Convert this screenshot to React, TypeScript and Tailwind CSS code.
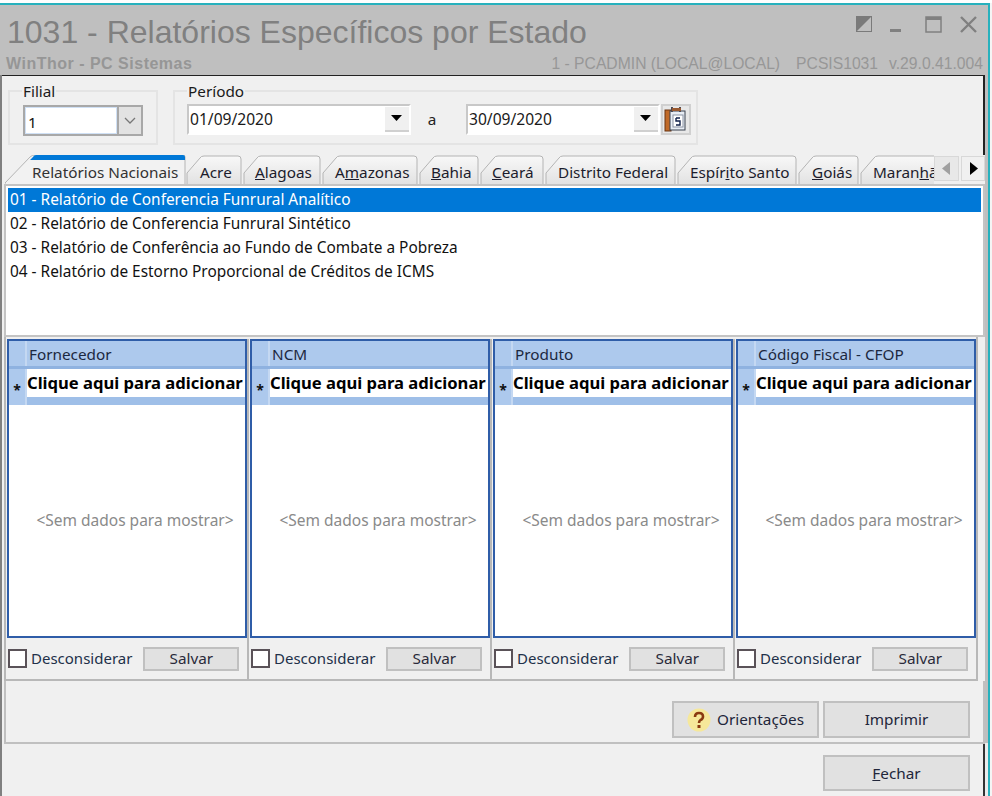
import React from "react";

const FONT = { fontFamily: '"Noto Sans", sans-serif' };
const SANS = { fontFamily: '"Liberation Sans", sans-serif' };

const tabs = [
  { w: 57, label: "Acre", x: 14 },
  { w: 79, label: "Alagoas", u: 0, x: 12 },
  { w: 97, label: "Amazonas", u: 1, x: 13 },
  { w: 61, label: "Bahia", u: 0, x: 12 },
  { w: 65, label: "Ceará", u: 0, x: 12 },
  { w: 132, label: "Distrito Federal", x: 13 },
  { w: 121, label: "Espírito Santo", u: 5, x: 13 },
  { w: 62, label: "Goiás", u: 0, x: 14 },
  { w: 85, label: "Maranhão", u: 5, x: 13 },
];

function Label({ text, u }: { text: string; u?: number }) {
  if (u === undefined) return <>{text}</>;
  return (
    <>
      {text.slice(0, u)}
      <span className="underline">{text[u]}</span>
      {text.slice(u + 1)}
    </>
  );
}

function Tab({ w, label, u, x }: { w: number; label: string; u?: number; x: number }) {
  return (
    <div className="relative h-[29px] shrink-0" style={{ width: w }}>
      <svg className="absolute inset-0" width={w} height={29}>
        <defs>
          <linearGradient id="tabfill" x1="0" y1="0" x2="0" y2="1">
            <stop offset="0" stopColor="#f8f8f8" />
            <stop offset="1" stopColor="#e2e2e2" />
          </linearGradient>
        </defs>
        <path
          d={`M1 29 V18 L14 3 Q15 1 18 1 H${w - 5} Q${w - 2} 1 ${w - 2} 4 V29`}
          fill="url(#tabfill)"
          stroke="#b4b4b4"
        />
      </svg>
      <div
        className="absolute top-[5px] whitespace-nowrap text-[15.3px] leading-[24px] text-[#1c1c2c]"
        style={{ left: x }}
      >
        <Label text={label} u={u} />
      </div>
    </div>
  );
}

function Panel({ title }: { title: string }) {
  return (
    <div className="flex w-[243px] shrink-0 flex-col border-r-2 border-[#b8b8b8] pl-[1px] last:w-[241px] last:border-r-0">
      <div className="flex h-[299px] w-[240px] flex-col border-2 border-[#2f5da8] bg-white">
        <div className="flex h-[28px] border-b-[3px] border-[#8fb2e0] bg-[#adc9ed]">
          <div className="w-[18px] border-r-2 border-[#c4d8f2]" />
          <div className="pl-[2px] text-[15.3px] leading-[26px] text-[#1c2840]">{title}</div>
        </div>
        <div className="flex h-[36px]">
          <div className="flex w-[18px] items-center justify-center border-r-2 border-[#c4d8f2] bg-[#adc9ed] pt-1 text-[14px] font-bold text-[#111]">*</div>
          <div className="flex min-w-0 flex-1 flex-col">
            <div className="flex-1 whitespace-nowrap text-[16.6px] font-bold leading-[27px] text-black">Clique aqui para adicionar</div>
            <div className="h-[8px] bg-[#9fbfe8]" />
          </div>
        </div>
        <div className="flex flex-1 items-center justify-center pl-[16px] text-[15.5px] text-[#8a8a8a]">&lt;Sem dados para mostrar&gt;</div>
      </div>
      <div className="flex h-[41px] items-center pl-[1px]">
        <div className="h-[19px] w-[19px] shrink-0 border-2 border-[#5a5258] bg-white" />
        <div className="ml-[4px] whitespace-nowrap text-[15px] text-[#22304a]">Desconsiderar</div>
        <div className="ml-[11px] flex h-[24px] w-[96px] shrink-0 items-center justify-center border-2 border-[#c0c0c0] bg-[#e1e1e1] text-[15.3px] text-[#2a2a3a]">Salvar</div>
      </div>
    </div>
  );
}

function Btn({ className, children }: { className: string; children: React.ReactNode }) {
  return (
    <div className={`flex items-center justify-center border-2 border-[#c0c0c0] bg-[#e1e1e1] text-[15.3px] text-[#22263a] ${className}`}>
      {children}
    </div>
  );
}

function DropBtn() {
  return (
    <div className="flex h-[25px] w-[24px] items-center justify-center border-b-2 border-[#d0d0d0] bg-[#f0f0f0]">
      <svg width="12" height="7"><path d="M0 0H11L5.5 6Z" fill="#000" /></svg>
    </div>
  );
}

function DateBox({ value, w }: { value: string; w: number }) {
  return (
    <div className="flex h-[31px] items-center border-2 border-[#c8c8c8] border-r-white border-b-white bg-white pl-[1px]" style={{ width: w }}>
      <div className="flex-1 text-[15.6px] text-[#1a1a1a]">{value}</div>
      <DropBtn />
    </div>
  );
}

export default function App() {
  return (
    <div className="h-[796px] w-[992px] overflow-hidden bg-[#f5f5f5]" style={FONT}>
      <div className="h-[3px] bg-white" />
      <div className="w-[990px] border-t-2 border-r-2 border-[#27b1bd]">
        <div className="flex h-[70px] flex-col justify-between bg-[#bfbfbf] pr-[4px] pl-[7px]">
          <div className="flex items-start justify-between">
            <div className="whitespace-nowrap pt-[4px] text-[32px] leading-[46px] text-[#808080]" style={SANS}>
              1031 - Relatórios Específicos por Estado
            </div>
            <div className="flex items-center pt-[11px] pr-[7px]">
              <svg width="17" height="17" viewBox="0 0 17 17"><rect x="0.5" y="0.5" width="15" height="15" fill="none" stroke="#7a7a7a" /><path d="M1 1H15L1 15Z" fill="#7a7a7a" /></svg>
              <svg className="ml-[17px]" width="11" height="17" viewBox="0 0 11 17"><rect y="13" width="11" height="3" fill="#808080" /></svg>
              <svg className="ml-[24px]" width="17" height="17" viewBox="0 0 17 17"><rect x="1" y="1" width="15" height="15" fill="none" stroke="#808080" strokeWidth="1.5" /><rect x="1" y="1" width="15" height="3" fill="#808080" /></svg>
              <svg className="ml-[18px]" width="17" height="17" viewBox="0 0 17 17"><path d="M1 1L16 16M16 1L1 16" stroke="#808080" strokeWidth="2.4" /></svg>
            </div>
          </div>
          <div className="flex items-end justify-between pb-[5px]" style={SANS}>
            <div className="-ml-[1px] text-[16px] font-bold leading-[17px] tracking-[0.5px] text-[#969696]">WinThor - PC Sistemas</div>
            <div className="flex whitespace-nowrap pr-[1px] text-[15.7px] leading-[17px] text-[#979797]">
              <span>1 - PCADMIN (LOCAL@LOCAL)</span>
              <span className="ml-[16px]">PCSIS1031</span>
              <span className="ml-[11px]">v.29.0.41.004</span>
            </div>
          </div>
        </div>

        <div className="flex h-[721px]">
          <div className="flex w-[985px] flex-col border-l-2 border-[#808080] bg-[#f0f0f0]">
            <div className="flex h-[80px] border-t border-r-2 border-[#222] border-l-0 pt-[8px] pl-[6px]">
              <fieldset className="h-[61px] w-[150px] border-2 border-[#e4e4e4] pl-[12px]">
                <legend className="px-[1px] text-[15.3px] leading-[14px] text-[#1a1a1a]">Filial</legend>
                <div className="mt-[7px] ml-[1px] flex h-[31px] w-[120px] border-2 border-[#a8a8a8] bg-white">
                  <div className="flex-1 border border-[#cfe0f5] pl-[2px] text-[15.3px] leading-[28px] text-[#111]">1</div>
                  <div className="flex w-[24px] items-center justify-center border-l-2 border-[#a8a8a8] bg-[#e2e2e2]">
                    <svg width="12" height="7"><path d="M1 1L6 6L11 1" fill="none" stroke="#777" strokeWidth="1.3" /></svg>
                  </div>
                </div>
              </fieldset>
              <fieldset className="ml-[15px] h-[61px] w-[525px] border-2 border-[#e4e4e4] pl-[12px]">
                <legend className="px-[1px] text-[15.3px] leading-[14px] text-[#1a1a1a]">Período</legend>
                <div className="mt-[6px] flex items-center">
                  <DateBox value="01/09/2020" w={224} />
                  <div className="w-[55px] pr-[13px] text-center text-[15.3px] text-[#222]">a</div>
                  <DateBox value="30/09/2020" w={194} />
                  <div className="ml-[1px] flex h-[31px] w-[30px] items-center justify-center border-2 border-[#d0d0d0] bg-[#e8e8e8]">
                    <svg width="26" height="27" viewBox="0 0 26 27">
                      <rect x="2" y="4" width="6" height="21" fill="#c06a28" stroke="#6a3410" strokeWidth="1" />
                      <rect x="7" y="5" width="15" height="19" fill="#e8edf4" stroke="#39414f" strokeWidth="1" />
                      <path d="M9 1V6M17 1V6" stroke="#4a4a55" strokeWidth="2" />
                      <rect x="9" y="2" width="9" height="3" fill="#9a5a30" />
                      <rect x="10" y="9" width="10" height="12" fill="#fff" stroke="#8a93a3" strokeWidth="1" />
                      <path d="M13 12H17M13 12V15H17V19H13" fill="none" stroke="#10204a" strokeWidth="1.4" />
                    </svg>
                  </div>
                </div>
              </fieldset>
            </div>

            <div className="flex h-[29px] items-end pl-[3px]">
              <div className="relative h-[29px] w-[181px] shrink-0">
                <svg className="absolute inset-0" width="181" height="29">
                  <path d="M0 29 V28 L25 2 Q27 0 30 0 H178 Q180 0 180 2 V29" fill="#f2f2f2" stroke="#b4b4b4" />
                  <path d="M25 5 L28 2 Q29 0 31 0 H178 Q180 0 180 2 V5 Z" fill="#0078d7" />
                </svg>
                <div className="absolute top-[5px] left-[27px] whitespace-nowrap text-[15.3px] leading-[24px] text-[#333]">Relatórios Nacionais</div>
              </div>
              <div className="flex h-[29px] w-[748px] overflow-hidden">
                {tabs.map((t) => (
                  <Tab key={t.label} {...t} />
                ))}
              </div>
              <div className="mb-[3px] flex gap-[2px]">
                <div className="flex h-[25px] w-[25px] items-center justify-center border border-[#d8d8d8] bg-[#e8e8e8]">
                  <svg width="9" height="13"><path d="M8 0V13L0 6.5Z" fill="#a0a0a0" /></svg>
                </div>
                <div className="flex h-[25px] w-[24px] items-center justify-center border border-[#d8d8d8] bg-[#f0f0f0]">
                  <svg width="9" height="13"><path d="M1 0V13L9 6.5Z" fill="#000" /></svg>
                </div>
              </div>
            </div>

            <div className="ml-[2px]">
              <div className="h-[153px] border-2 border-[#c4c4c4] bg-white p-[2px]">
                <div className="h-[24px] whitespace-nowrap bg-[#0078d7] pl-[2px] text-[15.4px] leading-[24px] text-white">01 - Relatório de Conferencia Funrural Analítico</div>
                <div className="h-[24px] whitespace-nowrap pl-[2px] text-[15.4px] leading-[24px] text-[#111]">02 - Relatório de Conferencia Funrural Sintético</div>
                <div className="h-[24px] whitespace-nowrap pl-[2px] text-[15.4px] leading-[24px] text-[#111]">03 - Relatório de Conferência ao Fundo de Combate a Pobreza</div>
                <div className="h-[24px] whitespace-nowrap pl-[2px] text-[15.4px] leading-[24px] text-[#111]">04 - Relatório de Estorno Proporcional de Créditos de ICMS</div>
              </div>
              <div className="flex h-[344px] w-[974px] border-2 border-t-0 border-[#b8b8b8] pt-[2px]">
                <Panel title="Fornecedor" />
                <Panel title="NCM" />
                <Panel title="Produto" />
                <Panel title="Código Fiscal - CFOP" />
              </div>
            </div>

            <div className="ml-[2px] flex h-[63px] justify-end gap-[4px] border-2 border-t-0 border-[#c0c0c0] pt-[20px] pr-[13px]">
              <Btn className="h-[37px] w-[147px] gap-[6px]">
                <svg width="24" height="24" viewBox="0 0 24 24">
                  <circle cx="12" cy="12" r="11.5" fill="#f6e89a" />
                  <path d="M8 9Q8 5 12 5Q16 5 16 8.5Q16 11 13.5 12Q12 13 12 15" fill="none" stroke="#8a3a10" strokeWidth="2.6" />
                  <rect x="10.5" y="17" width="3" height="3" fill="#8a3a10" />
                </svg>
                Orientações
              </Btn>
              <Btn className="h-[37px] w-[147px]">Imprimir</Btn>
            </div>
            <div className="flex flex-1 justify-end border-r-2 border-[#333] pt-[11px] pr-[13px]">
              <Btn className="h-[36px] w-[147px]">
                <Label text="Fechar" u={0} />
              </Btn>
            </div>
          </div>
          <div className="flex w-[3px] flex-col">
            <div className="flex-1 bg-[#bfbfbf]" />
            <div className="h-[53px] bg-[#ececec]" />
          </div>
        </div>
      </div>
    </div>
  );
}
